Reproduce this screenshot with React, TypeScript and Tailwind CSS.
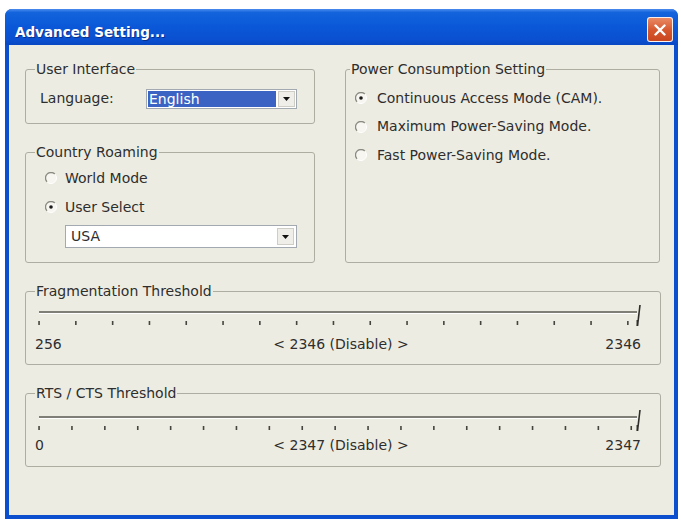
import React from 'react'

const Radio = ({ checked }: { checked?: boolean }) => (
  <svg width="12" height="12" viewBox="0 0 12 12" className="shrink-0">
    <circle cx="6" cy="6" r="5.4" fill="#f7f6f0" />
    <path d="M9.9 2.1 A5.5 5.5 0 0 0 2.1 9.9" fill="none" stroke="#8b8a82" strokeWidth="1.3" />
    <path d="M9.9 2.1 A5.5 5.5 0 0 1 2.1 9.9" fill="none" stroke="#ffffff" strokeWidth="1" />
    {checked && <circle cx="6" cy="6" r="1.8" fill="#1b1b1b" />}
  </svg>
)

const DropButton = () => (
  <div className="w-[17px] h-full flex items-center justify-center bg-[#efeee8] border border-[#cfcec6]">
    <svg width="7" height="4" viewBox="0 0 7 4">
      <path d="M0 0 H7 L3.5 4 Z" fill="#111" />
    </svg>
  </div>
)

const Slider = ({ ticks, step }: { ticks: number; step: number }) => {
  const xs = Array.from({ length: ticks }, (_, i) => 13 + i * step)
  return (
    <svg width="634" height="28" viewBox="0 0 634 28" className="block">
      <rect x="13" y="9" width="598" height="2" fill="#7f7e77" />
      <rect x="13" y="11" width="598" height="1" fill="#ffffff" />
      {xs.map((x) => (
        <rect key={x} x={x - 0.75} y="19" width="1.6" height="4" fill="#45443f" />
      ))}
      <rect x="610.5" y="18" width="1.5" height="6" fill="#3a3935" />
      <path d="M614 3 L611.5 24" stroke="#2e2d2a" strokeWidth="1.6" fill="none" />
    </svg>
  )
}

export default function App() {
  return (
    <div className="w-[681px] h-[523px] bg-white pt-[9px] pl-[5px] font-['DejaVu_Sans',sans-serif] text-[14px] text-[#2e2e2e]">
      <div className="w-[673px] h-[510px] flex flex-col rounded-t-[7px] bg-[#0b4fce]">
        {/* title bar */}
        <div className="h-[36px] flex items-start rounded-t-[7px] bg-[linear-gradient(to_bottom,#4a8bee_0%,#1263dc_10%,#0a58d8_50%,#0a50d0_85%,#0847c4_100%)]">
          <span className="ml-[10px] mt-[15px] leading-[16px] text-[13.5px] font-bold text-white [text-shadow:1px_1px_0_#0a2f8a]">
            Advanced Setting...
          </span>
          <div className="ml-auto mt-[8px] mr-[5px] w-[26px] h-[25px] rounded-[3px] border border-white/90 bg-[linear-gradient(to_bottom,#e98a66,#d5562d_55%,#c9471f)] flex items-center justify-center">
            <svg width="12" height="12" viewBox="0 0 12 12">
              <path d="M1.5 1.5 L10.5 10.5 M10.5 1.5 L1.5 10.5" stroke="#fff" strokeWidth="2.4" strokeLinecap="round" />
            </svg>
          </div>
        </div>

        {/* body */}
        <div className="flex-1 mx-[4px] mb-[4px] bg-[#edece2] pl-[16px] pt-[16px]">
          <div className="flex gap-[30px]">
            <div className="w-[290px] flex flex-col">
              <fieldset className="h-[63px] border border-[#aeada2] rounded-[3px]">
                <legend className="ml-[9px] px-[1px] leading-[16px]">User Interface</legend>
                <div className="mt-[11px] flex items-center">
                  <span className="pl-[14px] w-[120px]">Language:</span>
                  <div className="w-[151px] h-[20px] flex border border-[#a3a9b1] bg-white p-[1px]">
                    <div className="flex-1 bg-[#3b63c3] text-white leading-[16px] pl-[1px]">English</div>
                    <div className="w-[2px]" />
                    <DropButton />
                  </div>
                </div>
              </fieldset>

              <fieldset className="mt-[20px] h-[119px] border border-[#aeada2] rounded-[3px]">
                <legend className="ml-[9px] px-[1px] leading-[16px]">Country Roaming</legend>
                <div className="mt-[8px] pl-[19px] flex flex-col gap-[9px]">
                  <label className="h-[20px] flex items-center gap-[8px]">
                    <Radio />
                    World Mode
                  </label>
                  <label className="h-[20px] flex items-center gap-[8px]">
                    <Radio checked />
                    User Select
                  </label>
                </div>
                <div className="mt-[8px] ml-[39px] w-[232px] h-[23px] flex border border-[#a3a9b1] bg-white p-[2px]">
                  <div className="flex-1 pl-[3px] leading-[17px]">USA</div>
                  <DropButton />
                </div>
              </fieldset>
            </div>

            <fieldset className="w-[315px] h-[202px] border border-[#aeada2] rounded-[3px]">
              <legend className="ml-[4px] px-[1px] leading-[16px]">Power Consumption Setting</legend>
              <div className="mt-[11px] pl-[9px] flex flex-col gap-[8.5px]">
                <label className="h-[20px] flex items-center gap-[10px]">
                  <Radio checked />
                  Continuous Access Mode (CAM).
                </label>
                <label className="h-[20px] flex items-center gap-[10px]">
                  <Radio />
                  Maximum Power-Saving Mode.
                </label>
                <label className="h-[20px] flex items-center gap-[10px]">
                  <Radio />
                  Fast Power-Saving Mode.
                </label>
              </div>
            </fieldset>
          </div>

          <fieldset className="mt-[20px] w-[636px] h-[82px] border border-[#aeada2] rounded-[3px]">
            <legend className="ml-[9px] px-[1px] leading-[16px]">Fragmentation Threshold</legend>
            <div className="mt-[3px]">
              <Slider ticks={17} step={36.8} />
            </div>
            <div className="mt-[6px] pl-[9px] pr-[19px] grid grid-cols-[1fr_auto_1fr] leading-[16px]">
              <span>256</span>
              <span className="pl-[6px]">&lt; 2346 (Disable) &gt;</span>
              <span className="text-right">2346</span>
            </div>
          </fieldset>

          <fieldset className="mt-[20px] w-[636px] h-[82px] border border-[#aeada2] rounded-[3px]">
            <legend className="ml-[9px] px-[1px] leading-[16px]">RTS / CTS Threshold</legend>
            <div className="mt-[6px]">
              <Slider ticks={19} step={32.9} />
            </div>
            <div className="mt-[2px] pl-[9px] pr-[19px] grid grid-cols-[1fr_auto_1fr] leading-[16px]">
              <span>0</span>
              <span className="pl-[6px]">&lt; 2347 (Disable) &gt;</span>
              <span className="text-right">2347</span>
            </div>
          </fieldset>
        </div>
      </div>
    </div>
  )
}
